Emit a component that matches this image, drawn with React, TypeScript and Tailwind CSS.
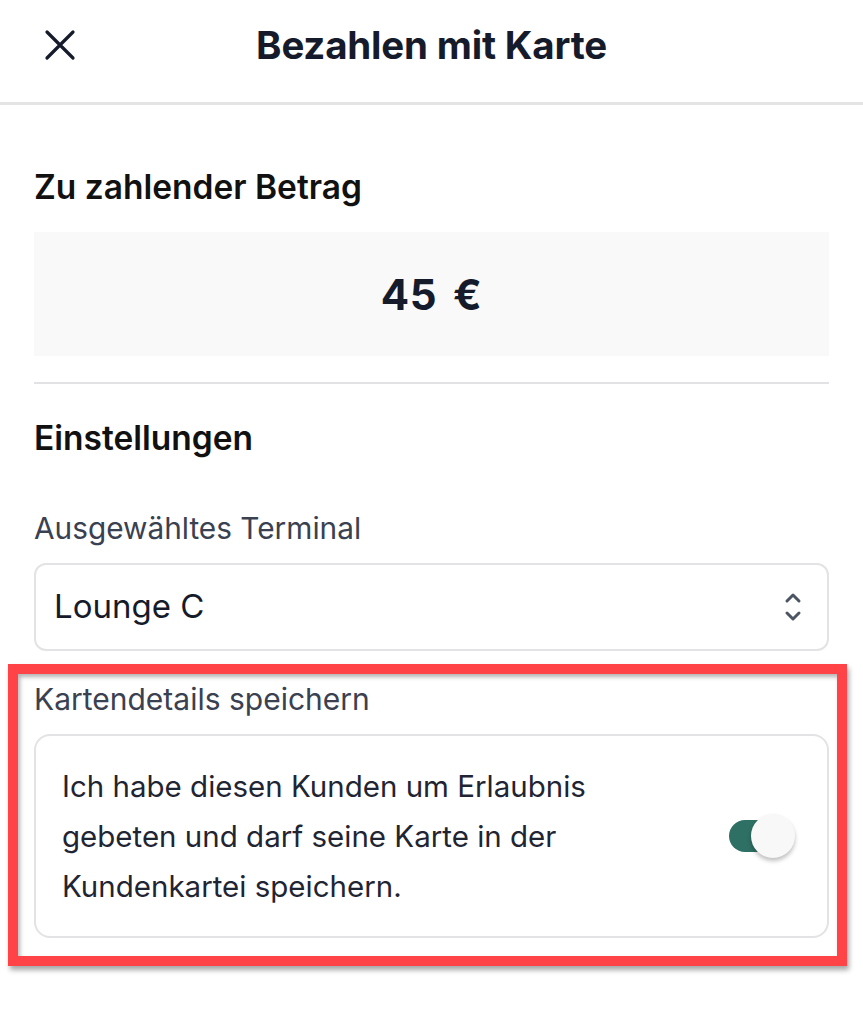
import { useState } from 'react';

function CloseIcon() {
  return (
    <svg width="32" height="32" viewBox="0 0 32 32" fill="none" stroke="#161b2b" strokeWidth="3.2" strokeLinecap="round">
      <path d="M3 3L29 29M29 3L3 29" />
    </svg>
  );
}

function Chevrons() {
  return (
    <svg width="20" height="32" viewBox="0 0 20 32" fill="none" stroke="#4b5563" strokeWidth="3" strokeLinecap="round" strokeLinejoin="round">
      <path d="M4 10L10 4L16 10" />
      <path d="M4 22L10 28L16 22" />
    </svg>
  );
}

export default function App() {
  const [saveCard, setSaveCard] = useState(true);

  return (
    <div className="w-[863px] h-[1010px] bg-white text-[#161b2b] font-['Inter','Noto_Sans',sans-serif]">
      {/* Header */}
      <div className="relative h-[105px] border-b-[3px] border-[#e4e4e4] flex items-center justify-center pb-[12px]">
        <button className="absolute left-[44px] top-[29px]" aria-label="Schließen">
          <CloseIcon />
        </button>
        <h1 className="text-[38.5px] leading-[46px] font-bold tracking-[-0.2px]">Bezahlen mit Karte</h1>
      </div>

      <div className="px-[34px]">
        {/* Amount */}
        <h2 className="mt-[64px] text-[33.5px] font-semibold leading-[36px] text-[#111111]">Zu zahlender Betrag</h2>
        <div className="mt-[27px] h-[124px] bg-[#f9f9f9] flex items-center justify-center">
          <span className="text-[42px] font-bold tracking-[0.5px] flex gap-[16px]">
            <span>45</span>
            <span>€</span>
          </span>
        </div>
        <div className="mt-[26px] h-[2px] bg-[#e2e2e4]" />

        {/* Settings */}
        <h2 className="mt-[36px] text-[33.5px] font-semibold leading-[36px] text-[#111111]">Einstellungen</h2>

        <div className="mt-[55px] text-[29.8px] leading-[34px] text-[#3a4150]">Ausgewähltes Terminal</div>
        <div className="mt-[18px] h-[88px] rounded-[12px] border-2 border-[#e3e3e6] flex items-center justify-between pl-[18px] pr-[24px]">
          <span className="text-[33px] text-[#161b2b]">Lounge C</span>
          <Chevrons />
        </div>

        {/* Highlighted section */}
        <div className="mt-[13px] ml-[-26px] mr-[-18px] border-[10px] border-[#ff4346] pl-[16px] pr-[8px] pt-[8px] pb-[18px] shadow-[2px_4px_5px_rgba(0,0,0,0.35),inset_2px_3px_4px_rgba(0,0,0,0.3)]">
          <div className="text-[30px] leading-[34px] text-[#3a4150]">Kartendetails speichern</div>
          <div className="mt-[18px] h-[204px] rounded-[16px] border-2 border-[#e3e3e6] flex items-center justify-between pl-[26px] pr-[32px]">
            <p className="text-[29.5px] leading-[50px] text-[#1f2533] w-[600px]">
              Ich habe diesen Kunden um Erlaubnis gebeten und darf seine Karte in der Kundenkartei speichern.
            </p>
            <button
              onClick={() => setSaveCard(!saveCard)}
              className="relative w-[68px] h-[46px] flex items-center"
              aria-label="Kartendetails speichern"
            >
              <span className={`absolute left-[2px] w-[58px] h-[32px] rounded-full ${saveCard ? 'bg-[#2f7064]' : 'bg-gray-300'}`} />
              <span
                className={`absolute top-[1px] w-[44px] h-[44px] rounded-full bg-[#f8f8f8] shadow-[0_3px_4px_rgba(0,0,0,0.25)] ${saveCard ? 'left-[24px]' : 'left-0'}`}
              />
            </button>
          </div>
        </div>
      </div>
    </div>
  );
}
